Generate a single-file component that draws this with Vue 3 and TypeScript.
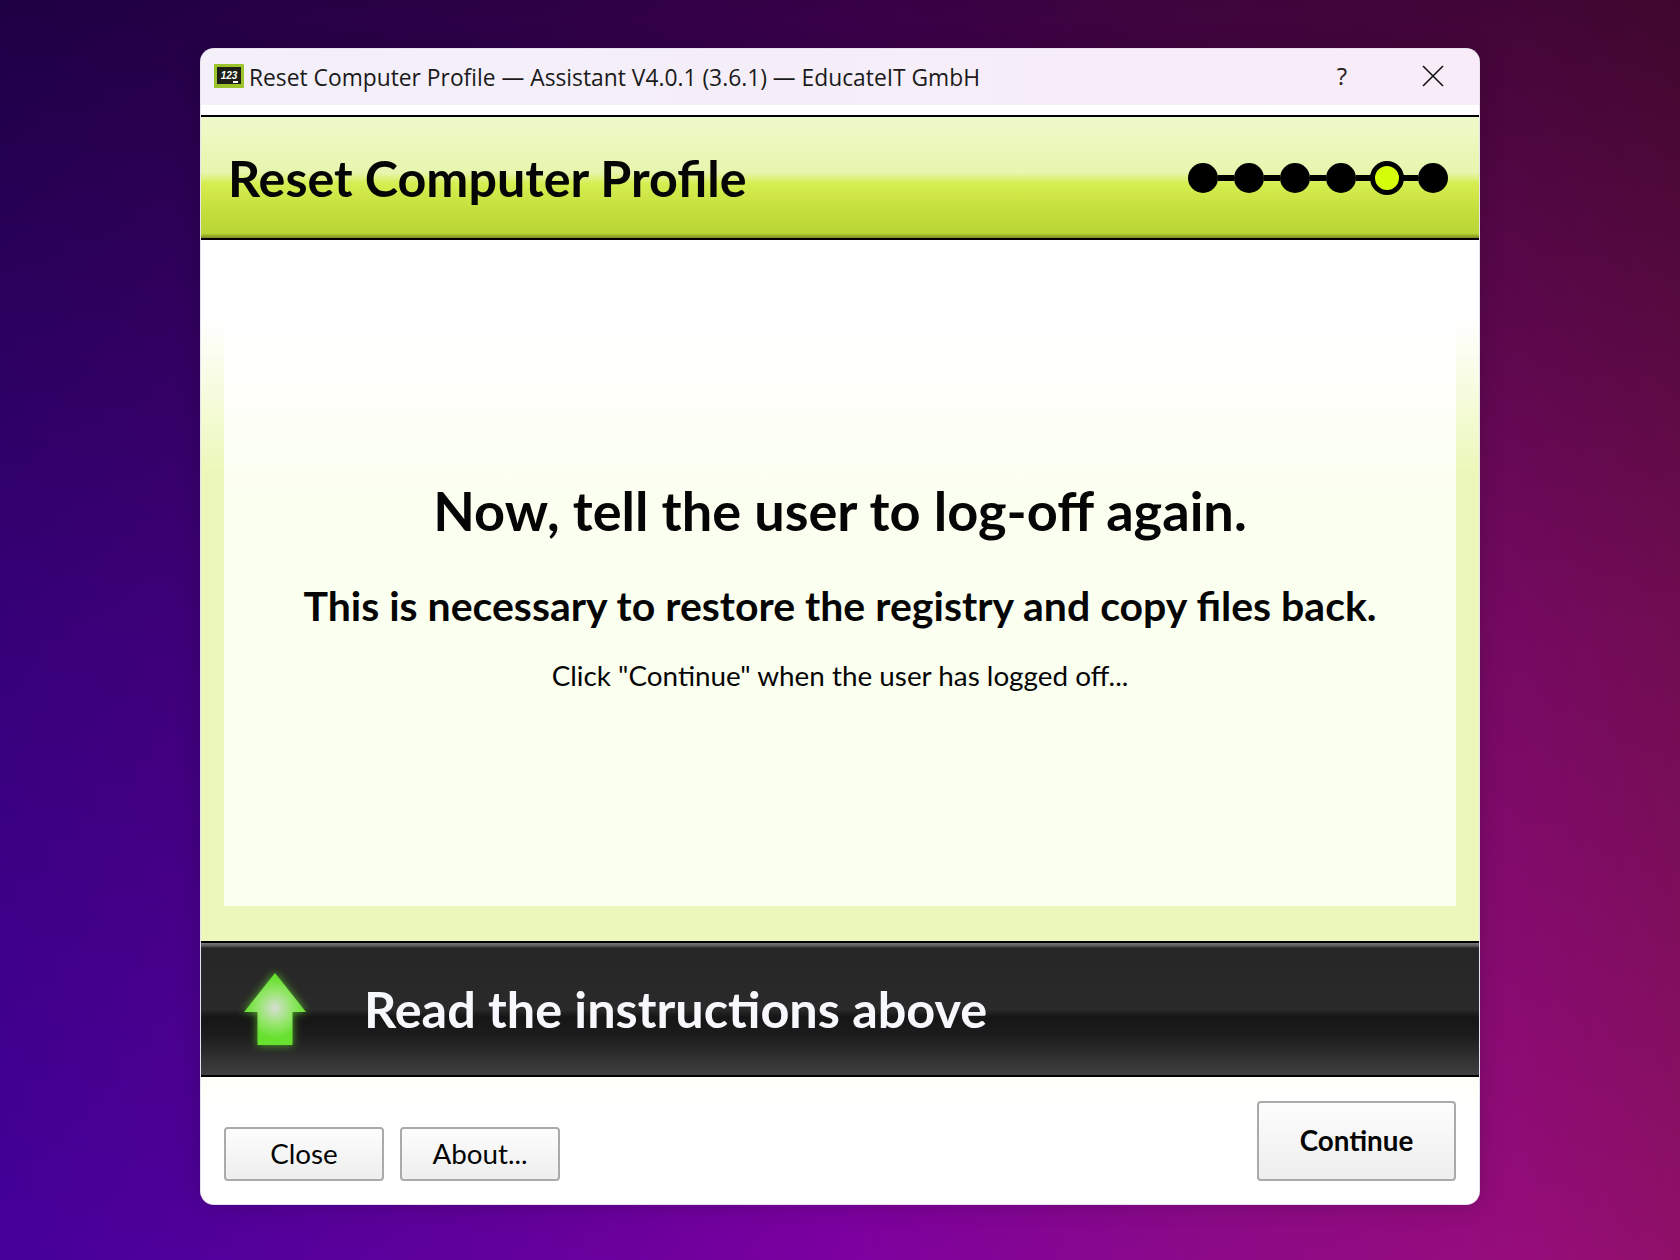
<script setup lang="ts">
const steps = [false, false, false, false, true, false];
</script>

<template>
  <div class="stage">
    <div class="window">
      <div class="titlebar">
        <svg class="app-icon" viewBox="0 0 30 24" width="30" height="24">
          <rect x="0" y="0" width="30" height="24" rx="1" fill="#9cc22c" />
          <rect x="3" y="3" width="24" height="17" fill="#1d1f17" />
          <text x="15" y="15" text-anchor="middle" class="icon-text">123</text>
          <rect x="19" y="17" width="5" height="2" fill="#fff" />
        </svg>
        <span class="title-text">Reset Computer Profile — Assistant V4.0.1 (3.6.1) — EducateIT GmbH</span>
        <span class="help">?</span>
        <svg class="close-x" viewBox="0 0 22 22" width="22" height="22">
          <path d="M1 1 L21 21 M21 1 L1 21" stroke="#111" stroke-width="1.6" fill="none" />
        </svg>
      </div>

      <div class="header">
        <h1>Reset Computer Profile</h1>
        <div class="stepper">
          <template v-for="(active, i) in steps" :key="i">
            <span v-if="i > 0" class="link"></span>
            <span class="dot" :class="{ active }"></span>
          </template>
        </div>
      </div>

      <div class="content">
        <div class="panel">
          <h2>Now, tell the user to log-off again.</h2>
          <h3>This is necessary to restore the registry and copy files back.</h3>
          <p>Click "Continue" when the user has logged off...</p>
        </div>
      </div>

      <div class="status">
        <svg class="arrow" viewBox="0 0 90 96" width="90" height="96">
          <defs>
            <radialGradient id="arrowFill" gradientUnits="userSpaceOnUse" cx="45" cy="44" r="30">
              <stop offset="0" stop-color="#d8dcd4" />
              <stop offset="0.55" stop-color="#96e66e" />
              <stop offset="1" stop-color="#68e030" />
            </radialGradient>
            <filter id="arrowGlow" x="-30%" y="-30%" width="160%" height="160%">
              <feGaussianBlur stdDeviation="4" />
            </filter>
          </defs>
          <path d="M45 9 L76 48 L62.5 48 L62.5 81 L27.5 81 L27.5 48 L14 48 Z" fill="#62e02a" opacity="0.75" filter="url(#arrowGlow)" />
          <path d="M45 9 L76 48 L62.5 48 L62.5 81 L27.5 81 L27.5 48 L14 48 Z" fill="url(#arrowFill)" />
        </svg>
        <span class="status-text">Read the instructions above</span>
      </div>

      <div class="footer">
        <button class="btn">Close</button>
        <button class="btn">About...</button>
        <button class="btn primary">Continue</button>
      </div>
    </div>
  </div>
</template>

<style>
html,
body {
  margin: 0;
  padding: 0;
}
</style>

<style scoped>
.stage {
  width: 1680px;
  height: 1260px;
  box-sizing: border-box;
  padding: 48px 200px 0;
  overflow: hidden;
  font-family: Lato, "Noto Sans", sans-serif;
  background:
    linear-gradient(180deg, rgba(0, 0, 0, 0.56) 0%, rgba(0, 0, 0, 0.22) 50%, rgba(0, 0, 0, 0) 100%),
    linear-gradient(90deg, #45009a 0%, #62009c 30%, #7c00a0 50%, #8c0a88 72%, #960c7c 90%, #8f1068 100%);
}

.window {
  width: 1280px;
  height: 1157px;
  box-sizing: border-box;
  border: 1px solid rgba(190, 170, 210, 0.35);
  border-radius: 14px;
  overflow: hidden;
  display: flex;
  flex-direction: column;
  background: #fff;
  box-shadow: 0 0 24px rgba(0, 0, 0, 0.18);
}

.titlebar {
  height: 56px;
  flex: none;
  display: flex;
  align-items: center;
  padding: 0 35px 0 13px;
  background: linear-gradient(90deg, #f3f0fa, #f8ecf8);
  margin-bottom: 10px;
}

.app-icon {
  flex: none;
  margin-right: 5px;
  margin-top: -2px;
}

.icon-text {
  font-family: "Liberation Sans", sans-serif;
  font-size: 10px;
  font-weight: 700;
  font-style: italic;
  fill: #fff;
}

.title-text {
  font-family: "Open Sans", "Noto Sans", sans-serif;
  font-size: 22.8px;
  color: #1a1a1a;
}

.help {
  margin-left: auto;
  margin-right: 75px;
  margin-top: -4px;
  font-family: "Open Sans", sans-serif;
  font-size: 24px;
  color: #222;
}

.close-x {
  margin-top: -3px;
}

.header {
  height: 125px;
  flex: none;
  box-sizing: border-box;
  border-top: 2px solid #000;
  border-bottom: 2px solid #000;
  display: flex;
  align-items: center;
  justify-content: space-between;
  padding: 0 31px 0 27px;
  background: linear-gradient(180deg, #eefacb 0%, #e6f6ae 46%, #d6ee50 55%, #c6e03e 75%, #b8d636 96%, #7f8c20 100%);
}

h1 {
  margin: 0;
  font-size: 50.2px;
  font-weight: 700;
  color: #050505;
}

.stepper {
  display: flex;
  align-items: center;
}

.dot {
  width: 30px;
  height: 30px;
  border-radius: 50%;
  background: #000;
  flex: none;
}

.dot.active {
  width: 34px;
  height: 34px;
  box-sizing: border-box;
  margin: 0 -2px;
  border: 5px solid #000;
  background: #d4ff0a;
}

.link {
  width: 16px;
  height: 6px;
  background: #000;
  flex: none;
}

.content {
  flex: 1;
  min-height: 0;
  display: flex;
  padding: 0 23px 35px;
  background: linear-gradient(180deg, #fff 0, #fff 80px, #ecf8bb 230px);
}

.panel {
  flex: 1;
  box-sizing: border-box;
  padding-top: 23px;
  display: flex;
  flex-direction: column;
  align-items: center;
  justify-content: center;
  text-align: center;
  color: #050505;
  background: linear-gradient(180deg, #fff 0, #fff 80px, #fbfff0 260px);
}

h2 {
  margin: 0 0 38px;
  font-size: 54.1px;
  font-weight: 700;
}

h3 {
  margin: 0 0 29px;
  font-size: 41px;
  font-weight: 700;
}

p {
  margin: 0;
  font-size: 27.85px;
}

.status {
  height: 136px;
  flex: none;
  box-sizing: border-box;
  border-top: 2px solid #000;
  border-bottom: 2px solid #000;
  display: flex;
  align-items: center;
  padding-left: 29px;
  background: linear-gradient(180deg, #777 0, #555 3px, #262626 5px, #2a2a2a 50%, #161616 56%, #1c1c1c 70%, #404040 100%);
}

.arrow {
  flex: none;
  margin-top: 6px;
}

.status-text {
  margin-left: 44px;
  margin-bottom: 2px;
  font-size: 50.4px;
  font-weight: 700;
  color: #f6f8fc;
}

.footer {
  height: 127px;
  flex: none;
  box-sizing: border-box;
  display: flex;
  align-items: flex-end;
  gap: 16px;
  padding: 0 23px 23px;
  background: linear-gradient(180deg, #fffff8, #fff 30px);
}

.btn {
  width: 160px;
  height: 54px;
  box-sizing: border-box;
  border: 2px solid #aaa;
  border-radius: 4px;
  background: linear-gradient(180deg, #fdfdfd, #eeeeee);
  font-family: Lato, "Noto Sans", sans-serif;
  font-size: 27.8px;
  color: #050505;
  padding: 0 0 2px;
}

.btn.primary {
  width: 199px;
  height: 80px;
  margin-left: auto;
  font-weight: 700;
}
</style>
